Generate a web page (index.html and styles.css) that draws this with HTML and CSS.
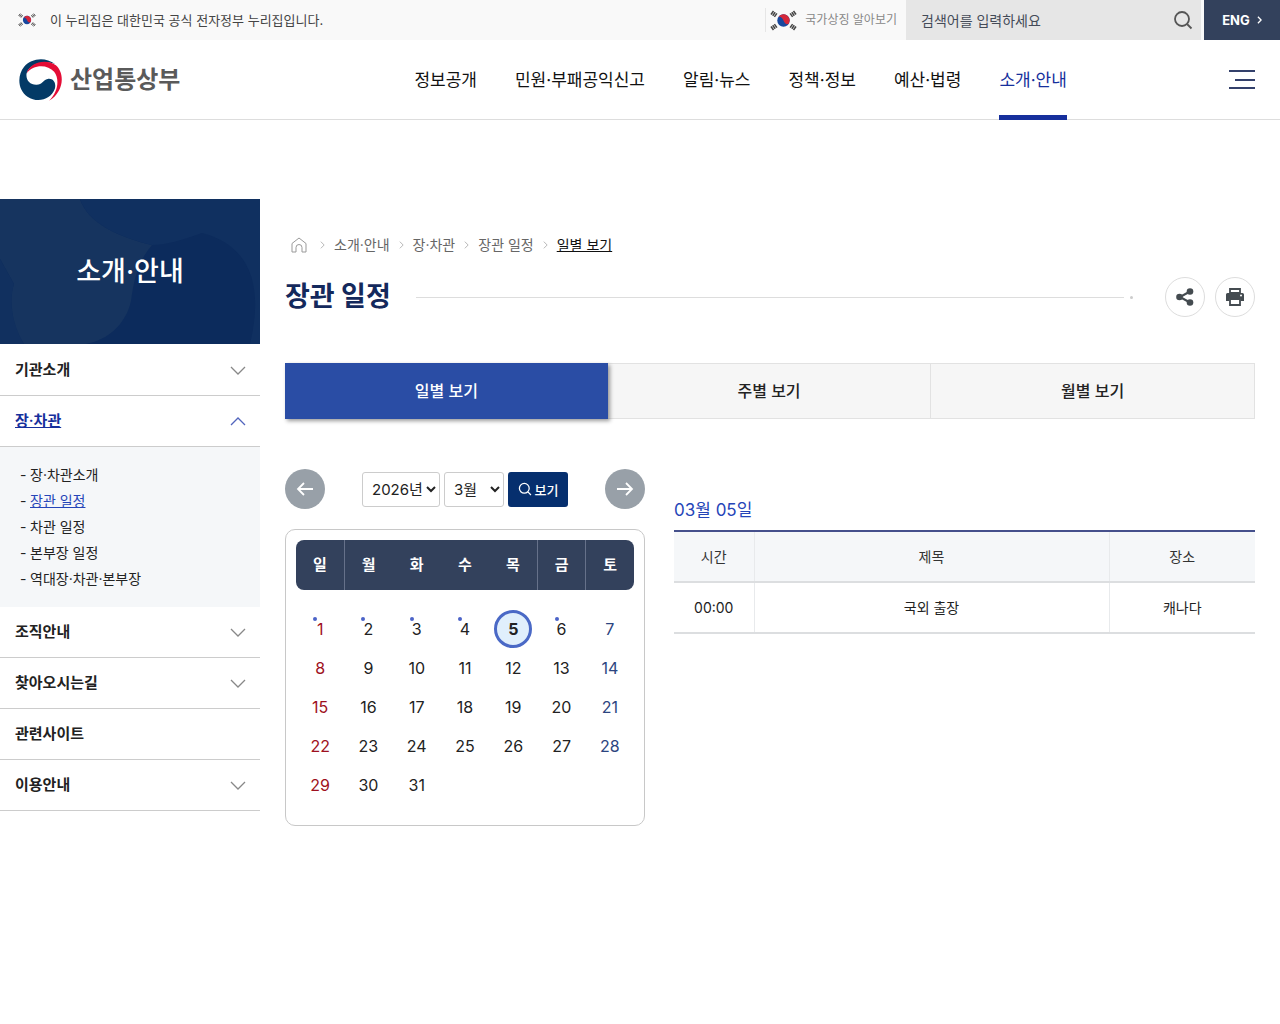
FILE: index.html
```html
<!DOCTYPE html>
<html lang="ko">
<head>
    <meta charset="UTF-8">
    <meta name="viewport" content="width=device-width, initial-scale=1.0">
    <title>장관 일정 | 산업통상부</title>
    <link rel="stylesheet" href="styles.css">
</head>
<body>
    <!-- 공통 아이콘 -->
    <svg class="sprite" aria-hidden="true">
        <symbol id="flag" viewBox="0 0 27 21">
            <circle cx="13.5" cy="10.5" r="6.2" fill="#17479e"/>
            <path d="M8.2 7.2A6.2 6.2 0 0 1 18.8 13.7C17 15 14.5 13.5 13.5 10.5C12.5 8 10 6 8.2 7.2Z" fill="#d5273a"/>
            <g stroke="#444" stroke-width="1.5">
                <path d="M1 4.500L3.500 1M2.700 5.700L5.200 2.200M4.400 6.900L6.900 3.400"/>
                <path d="M26 4.500L23.500 1M24.300 5.700L21.800 2.200M22.600 6.900L20.100 3.400"/>
                <path d="M1 16.500L3.500 20M2.700 15.300L5.200 18.800M4.400 14.100L6.900 17.600"/>
                <path d="M26 16.500L23.500 20M24.300 15.300L21.800 18.800M22.600 14.100L20.100 17.600"/>
            </g>
        </symbol>
        <symbol id="search" viewBox="0 0 20 20">
            <path d="M14.5 14.5L18.5 18.5M16 9A7 7 0 1 1 2 9A7 7 0 0 1 16 9Z" fill="none" stroke="currentColor" stroke-width="1.8"/>
        </symbol>
        <symbol id="down" viewBox="0 0 16 9">
            <path d="M1 1L8 8L15 1" fill="none" stroke="currentColor" stroke-width="1.3"/>
        </symbol>
        <symbol id="right" viewBox="0 0 6 10">
            <path d="M1 1L5 5L1 9" fill="none" stroke="currentColor"/>
        </symbol>
    </svg>

    <div class="top-bar">
        <p class="official"><svg class="flag-small"><use href="#flag"/></svg>이 누리집은 대한민국 공식 전자정부 누리집입니다.</p>
        <a href="#" class="symbol-link"><svg class="flag"><use href="#flag"/></svg>국가상징 알아보기</a>
        <form class="search">
            <input type="text" placeholder="검색어를 입력하세요" aria-label="검색어">
            <button type="button" aria-label="검색"><svg><use href="#search"/></svg></button>
        </form>
        <a href="#" class="lang">ENG<svg viewBox="0 0 6 10"><path d="M1 1L5 5L1 9" fill="none" stroke="currentColor" stroke-width="1.6"/></svg></a>
    </div>

    <header class="header">
        <a href="#" class="logo">
            <svg viewBox="0 0 126 122" aria-hidden="true">
                <path d="M106 14C75 -9 35 -2 15 22C-6 48 -4 90 25 110C55 130 94 118 105 87C110 68 99 55 84 58C70 61 68 76 50 75C32 74 20 62 22 43C28 18 64 2 106 14Z" fill="#033a66"/>
                <path d="M22 42C32 8 80 -2 108 18C135 42 132 95 88 122C114 95 120 60 103 37C84 15 42 14 22 42Z" fill="#e40d36"/>
            </svg>
            산업통상부
        </a>
        <nav class="gnb" aria-label="주메뉴">
            <a href="#">정보공개</a>
            <a href="#">민원·부패공익신고</a>
            <a href="#">알림·뉴스</a>
            <a href="#">정책·정보</a>
            <a href="#">예산·법령</a>
            <a href="#" class="on">소개·안내</a>
        </nav>
        <button type="button" class="all-menu" aria-label="전체메뉴">
            <svg viewBox="0 0 26 20"><path d="M0 1H26M6 10H26M0 18H26" stroke="#33406b" stroke-width="2"/></svg>
        </button>
    </header>

    <div class="container">
        <aside class="side">
            <div class="side-title">
                <svg viewBox="0 0 260 145" preserveAspectRatio="none" aria-hidden="true">
                    <path d="M0 0H80C88 24 118 38 152 46C138 62 134 80 131 102C126 125 108 141 86 145H24C12 128 8 100 14 85L0 60Z" fill="#16345f"/>
                    <path d="M0 60L14 85C8 105 14 128 24 145H0Z" fill="#11305f"/>
                    <path d="M80 0H260V145H250C262 95 256 48 202 34C180 42 165 46 152 46C118 38 88 24 80 0Z" fill="#103060"/>
                </svg>
                <h2>소개·안내</h2>
            </div>
            <ul class="lnb">
                <li><a href="#">기관소개<svg><use href="#down"/></svg></a></li>
                <li class="on">
                    <a href="#"><span>장·차관</span><svg><use href="#down"/></svg></a>
                    <ul class="sub">
                        <li><a href="#">장·차관소개</a></li>
                        <li><a href="#" class="current">장관 일정</a></li>
                        <li><a href="#">차관 일정</a></li>
                        <li><a href="#">본부장 일정</a></li>
                        <li><a href="#">역대장·차관·본부장</a></li>
                    </ul>
                </li>
                <li><a href="#">조직안내<svg><use href="#down"/></svg></a></li>
                <li><a href="#">찾아오시는길<svg><use href="#down"/></svg></a></li>
                <li><a href="#">관련사이트</a></li>
                <li><a href="#">이용안내<svg><use href="#down"/></svg></a></li>
            </ul>
        </aside>

        <main class="content">
            <nav class="location" aria-label="현재 위치">
                <a href="#" aria-label="홈"><svg class="home" viewBox="0 0 16 16"><path d="M1 6.5L8 1L15 6.5V15H11V10.5A3 3 0 0 0 5 10.5V15H1Z" fill="none" stroke="#999"/></svg></a>
                <svg class="arrow"><use href="#right"/></svg>
                <a href="#">소개·안내</a>
                <svg class="arrow"><use href="#right"/></svg>
                <a href="#">장·차관</a>
                <svg class="arrow"><use href="#right"/></svg>
                <a href="#">장관 일정</a>
                <svg class="arrow"><use href="#right"/></svg>
                <a href="#" class="current">일별 보기</a>
            </nav>

            <div class="title-row">
                <h1>장관 일정</h1>
                <span class="line"></span>
                <span class="dot"></span>
                <button type="button" aria-label="공유">
                    <svg viewBox="0 0 20 20"><path d="M5 10L15 4.5M5 10L15 15.5" stroke="#444b50" stroke-width="2"/><g fill="#444b50"><circle cx="4.5" cy="10" r="3.3"/><circle cx="15" cy="4.5" r="3.3"/><circle cx="15" cy="15.5" r="3.3"/></g></svg>
                </button>
                <button type="button" aria-label="인쇄">
                    <svg viewBox="0 0 20 20"><path d="M5 2H15V6H5ZM5 12H15V18H5Z" fill="#fff" stroke="#444b50" stroke-width="1.8"/><path d="M2.5 6H17.5Q19 6 19 7.5V14H15.5V11.5H4.5V14H1V7.5Q1 6 2.5 6Z" fill="#444b50"/><circle cx="16" cy="8.5" r="1" fill="#fff"/></svg>
                </button>
            </div>

            <nav class="tabs" aria-label="일정 보기">
                <a href="#" class="on">일별 보기</a>
                <a href="#">주별 보기</a>
                <a href="#">월별 보기</a>
            </nav>

            <div class="schedule">
                <section class="calendar">
                    <form class="calendar-nav">
                        <button type="button" class="move" aria-label="이전 달"><svg viewBox="0 0 18 14"><path d="M17 7H2M8 1L2 7L8 13" fill="none" stroke="#fff" stroke-width="1.8"/></svg></button>
                        <div class="pick">
                            <select class="year" aria-label="연도"><option>2026년</option></select>
                            <select class="month" aria-label="월"><option>3월</option></select>
                            <button type="button" class="view"><svg><use href="#search"/></svg>보기</button>
                        </div>
                        <button type="button" class="move" aria-label="다음 달"><svg viewBox="0 0 18 14"><path d="M1 7H16M10 1L16 7L10 13" fill="none" stroke="#fff" stroke-width="1.8"/></svg></button>
                    </form>
                    <div class="calendar-box">
                        <table>
                            <thead>
                                <tr><th class="bar">일</th><th>월</th><th>화</th><th>수</th><th class="bar">목</th><th class="bar">금</th><th>토</th></tr>
                            </thead>
                            <tbody>
                                <tr><td><a href="#" class="has">1</a></td><td><a href="#" class="has">2</a></td><td><a href="#" class="has">3</a></td><td><a href="#" class="has">4</a></td><td><a href="#" class="today">5</a></td><td><a href="#" class="has">6</a></td><td><a href="#">7</a></td></tr>
                                <tr><td><a href="#">8</a></td><td><a href="#">9</a></td><td><a href="#">10</a></td><td><a href="#">11</a></td><td><a href="#">12</a></td><td><a href="#">13</a></td><td><a href="#">14</a></td></tr>
                                <tr><td><a href="#">15</a></td><td><a href="#">16</a></td><td><a href="#">17</a></td><td><a href="#">18</a></td><td><a href="#">19</a></td><td><a href="#">20</a></td><td><a href="#">21</a></td></tr>
                                <tr><td><a href="#">22</a></td><td><a href="#">23</a></td><td><a href="#">24</a></td><td><a href="#">25</a></td><td><a href="#">26</a></td><td><a href="#">27</a></td><td><a href="#">28</a></td></tr>
                                <tr><td><a href="#">29</a></td><td><a href="#">30</a></td><td><a href="#">31</a></td><td></td><td></td><td></td><td></td></tr>
                            </tbody>
                        </table>
                    </div>
                </section>

                <section class="day-list">
                    <h3>03월 05일</h3>
                    <table>
                        <thead>
                            <tr><th class="time">시간</th><th>제목</th><th class="place">장소</th></tr>
                        </thead>
                        <tbody>
                            <tr><td>00:00</td><td>국외 출장</td><td>캐나다</td></tr>
                        </tbody>
                    </table>
                </section>
            </div>
        </main>
    </div>
</body>
</html>
```
FILE: styles.css
```css
* {
    box-sizing: border-box;
}
body {
    margin: 0;
    font-family: Inter, "Noto Sans CJK KR", sans-serif;
    font-size: 14px;
    line-height: 20px;
    color: #222;
    background: #fff;
}
a {
    color: inherit;
    text-decoration: none;
}
h1, h2, h3, p, ul {
    margin: 0;
    padding: 0;
}
ul {
    list-style: none;
}
button, input, select {
    font-family: inherit;
    color: inherit;
}
button {
    display: flex;
    align-items: center;
    justify-content: center;
    padding: 0;
    border: 0;
    background: none;
    cursor: pointer;
}
table {
    width: 100%;
    border-collapse: collapse;
    table-layout: fixed;
}
.sprite {
    display: none;
}

/* 상단 바 */
.top-bar {
    display: flex;
    align-items: center;
    height: 40px;
    background: #f9f9f9;
}
.official {
    display: flex;
    align-items: center;
    gap: 14px;
    flex: 1;
    padding-left: 18px;
    font-size: 13px;
    color: #444;
}
.flag-small {
    width: 18px;
    height: 14px;
}
.symbol-link {
    display: flex;
    align-items: center;
    gap: 8px;
    height: 24px;
    padding: 0 9px 0 4px;
    border-left: 1px solid #e6e6e6;
    font-size: 12px;
    color: #888;
}
.flag {
    width: 27px;
    height: 21px;
}
.search {
    display: flex;
    align-items: center;
    width: 295px;
    height: 40px;
    padding: 0 8px 0 15px;
    background: #e6e6e6;
}
.search input {
    flex: 1;
    min-width: 0;
    padding: 0;
    border: 0;
    outline: 0;
    background: none;
    font-size: 14px;
}
.search input::placeholder {
    color: #444b58;
}
.search svg {
    width: 20px;
    height: 20px;
    color: #555;
}
.lang {
    display: flex;
    align-items: center;
    justify-content: center;
    gap: 7px;
    width: 76px;
    height: 40px;
    margin-left: 3px;
    background: #33415c;
    font-size: 13px;
    font-weight: 700;
    color: #fff;
}
.lang svg {
    width: 5px;
    height: 8px;
}

/* 헤더 */
.header {
    display: flex;
    align-items: center;
    height: 80px;
    padding: 0 25px 0 19px;
    border-bottom: 1px solid #ddd;
}
.logo {
    display: flex;
    align-items: center;
    gap: 8px;
    font-size: 24px;
    line-height: 36px;
    font-weight: 700;
    color: #5a5a5a;
}
.logo svg {
    width: 43px;
    height: 42px;
}
.gnb {
    display: flex;
    gap: 38px;
    margin: 0 auto 0 234px;
    font-size: 17px;
    color: #111;
}
.gnb a {
    height: 80px;
    line-height: 81px;
}
.gnb .on {
    border-bottom: 5px solid #162f9c;
    color: #162f9c;
}
.all-menu svg {
    width: 26px;
    height: 20px;
}

/* 왼쪽 메뉴 */
.container {
    display: flex;
    gap: 25px;
    padding: 79px 25px 40px 0;
}
.side {
    flex: 0 0 260px;
}
.side-title {
    position: relative;
    display: flex;
    align-items: center;
    justify-content: center;
    height: 145px;
    background: #0c2b5c;
    color: #fff;
}
.side-title svg {
    position: absolute;
    top: 0;
    left: 0;
    width: 100%;
    height: 100%;
}
.side-title h2 {
    position: relative;
    font-size: 27px;
    line-height: 40px;
    font-weight: 500;
}
.lnb {
    padding-top: 1px;
}
.lnb > li > a {
    display: flex;
    align-items: center;
    justify-content: space-between;
    height: 51px;
    padding: 0 14px 0 15px;
    border-bottom: 1px solid #ccc;
    font-size: 15px;
    font-weight: 600;
}
.lnb svg {
    width: 16px;
    height: 9px;
    color: #888;
}
.lnb > .on > a {
    color: #162f9c;
}
.lnb .on span {
    text-decoration: underline;
}
.lnb .on svg {
    color: #5265bd;
    transform: rotate(180deg);
}
.sub {
    padding: 15px 20px;
    background: #f5f7f9;
}
.sub li {
    line-height: 26px;
}
.sub li::before {
    content: "-";
    display: inline-block;
    width: 10px;
}
.sub .current {
    color: #2545b8;
    text-decoration: underline;
}

/* 본문 */
.content {
    flex: 1;
    min-width: 0;
    padding-top: 36px;
}
.location {
    display: flex;
    align-items: center;
    gap: 9px;
    padding-left: 6px;
    color: #666;
}
.location .home {
    display: block;
    width: 16px;
    height: 16px;
    margin-right: 4px;
}
.location .arrow {
    width: 5px;
    height: 10px;
    color: #aaa;
}
.location .current {
    color: #111;
    text-decoration: underline;
}
.title-row {
    display: flex;
    align-items: center;
    gap: 10px;
    margin: 22px 0 46px;
}
.title-row h1 {
    font-size: 27px;
    line-height: 42px;
    font-weight: 700;
    color: #14295c;
}
.title-row {
    height: 40px;
}
.line {
    flex: 1;
    height: 1px;
    margin-left: 15px;
    background: #ddd;
}
.dot {
    width: 3px;
    height: 3px;
    margin: 0 22px 0 -4px;
    border-radius: 50%;
    background: #ccc;
}
.title-row button {
    width: 40px;
    height: 40px;
    border: 1px solid #ddd;
    border-radius: 50%;
}
.title-row button svg {
    width: 20px;
    height: 20px;
}
.tabs {
    display: flex;
    border: 1px solid #e2e2e2;
    border-left: 0;
    background: #f6f6f6;
    font-size: 16px;
    font-weight: 500;
}
.tabs a {
    flex: 1;
    line-height: 54px;
    text-align: center;
}
.tabs a + a + a {
    border-left: 1px solid #e2e2e2;
}
.tabs .on {
    margin: -1px 0;
    line-height: 56px;
    background: #2a4da5;
    box-shadow: 2px 2px 4px rgba(0, 0, 0, 0.4);
    color: #fff;
}

/* 달력 */
.schedule {
    display: flex;
    gap: 29px;
    margin-top: 50px;
}
.calendar {
    flex: 0 0 360px;
}
.calendar-nav {
    display: flex;
    align-items: center;
    justify-content: space-between;
}
.move {
    width: 40px;
    height: 40px;
    border-radius: 50%;
    background: #98a0a8;
}
.move svg {
    width: 18px;
    height: 14px;
}
.pick {
    display: flex;
    gap: 4px;
}
.pick select {
    height: 35px;
    padding: 0 0 0 5px;
    border: 1px solid #ccc;
    border-radius: 3px;
    background: #fff;
    font-size: 15px;
}
.year {
    width: 78px;
}
.month {
    width: 60px;
}
.view {
    gap: 3px;
    width: 60px;
    height: 35px;
    border-radius: 3px;
    background: #062f6e;
    font-size: 13px;
    font-weight: 500;
    color: #fff;
}
.view svg {
    width: 14px;
    height: 14px;
}
.calendar-box {
    margin-top: 20px;
    padding: 10px 10px 21px;
    border: 1px solid #c8c8c8;
    border-radius: 10px;
}
.calendar-box th {
    height: 50px;
    padding: 0;
    background: #33415c;
    font-size: 15px;
    font-weight: 700;
    color: #fff;
}
.calendar-box th.bar {
    border-right: 1px solid #66718a;
}
.calendar-box th:first-child {
    border-radius: 8px 0 0 8px;
}
.calendar-box th:last-child {
    border-radius: 0 8px 8px 0;
}
.calendar-box tbody::before {
    content: "";
    display: block;
    height: 19px;
}
.calendar-box td {
    height: 39px;
    padding: 0;
    font-size: 16px;
}
.calendar-box td a {
    position: relative;
    display: block;
    width: 38px;
    margin: 0 auto;
    line-height: 38px;
    text-align: center;
}
.calendar-box td:first-child {
    color: #9e1020;
}
.calendar-box td:last-child {
    color: #2c4580;
}
.calendar-box .has::before {
    content: "";
    position: absolute;
    top: 7px;
    left: 12px;
    width: 4px;
    height: 4px;
    border-radius: 50%;
    background: #4b63c8;
}
.calendar-box td .today {
    border: 3px solid #4a69c6;
    border-radius: 50%;
    line-height: 32px;
    background: #e0effc;
    font-weight: 700;
}

/* 일정 목록 */
.day-list {
    flex: 1;
    min-width: 0;
    padding-top: 29px;
}
.day-list h3 {
    padding-bottom: 8px;
    font-size: 17px;
    line-height: 24px;
    font-weight: 400;
    color: #2545b8;
}
.day-list table {
    border-top: 2px solid #45508c;
}
.day-list th, .day-list td {
    height: 51px;
    padding: 0;
    border-bottom: 2px solid #dcdee0;
    text-align: center;
}
.day-list th {
    background: #f5f7f9;
    font-weight: 400;
    color: #333;
}
.day-list th + th, .day-list td + td {
    border-left: 1px solid #e8eaec;
}
.day-list .time {
    width: 80px;
}
.day-list .place {
    width: 146px;
}
```
